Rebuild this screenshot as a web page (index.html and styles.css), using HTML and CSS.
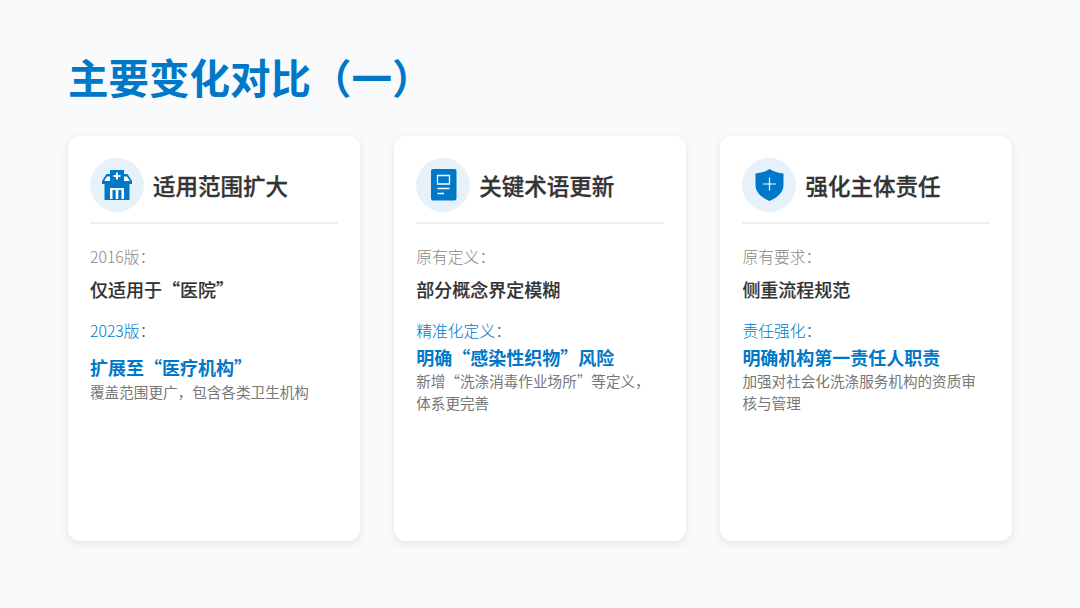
FILE: index.html
```html
<!DOCTYPE html>
<html lang="zh-CN">
<head>
<meta charset="utf-8">
<title>主要变化对比（一）</title>
<link rel="stylesheet" href="styles.css">
</head>
<body>
<main class="slide">
  <h1 class="title">主要变化对比（一）</h1>
  <div class="cards">
    <section class="card">
      <header class="card-head">
        <span class="badge">
          <svg class="icon" viewBox="0 0 32 32"><path fill="#0078c8" d="M9 1h14v4h3.500L31 12v3h-2.500v16h-25V15H1v-3l4.500-7H9z"/><path fill="#fff" d="M15 3.500h2V6h2.500v2H17v2.500h-2V8h-2.500V6H15z"/><path fill="#fff" d="M6 7.500h3V12H3.200zM23 7.500h3L28.800 12H23z"/><path fill="#fff" d="M9 19h14v11h-2.500v-9h-3.200v9h-2.600v-9h-3.200v9H9z"/></svg>
        </span>
        <h2 class="card-title">适用范围扩大</h2>
      </header>
      <p class="label">2016版：</p>
      <p class="strong">仅适用于“医院”</p>
      <p class="label accent">2023版：</p>
      <p class="strong accent tall">扩展至“医疗机构”</p>
      <p class="note">覆盖范围更广，包含各类卫生机构</p>
    </section>
    <section class="card">
      <header class="card-head">
        <span class="badge">
          <svg class="icon" viewBox="0 0 32 32"><rect x="4" y="0" width="25.500" height="31.500" rx="2" fill="#0078c8"/><path fill="none" stroke="#fff" stroke-width="1.300" d="M10.500 6.500h12v8.500h-12z"/><path fill="none" stroke="#fff" stroke-width="1.300" d="M10.500 19.500h12M10.500 24.500h6.500"/></svg>
        </span>
        <h2 class="card-title">关键术语更新</h2>
      </header>
      <p class="label">原有定义：</p>
      <p class="strong">部分概念界定模糊</p>
      <p class="label accent">精准化定义：</p>
      <p class="strong accent">明确“感染性织物”风险</p>
      <p class="note">新增“洗涤消毒作业场所”等定义，体系更完善</p>
    </section>
    <section class="card">
      <header class="card-head">
        <span class="badge">
          <svg class="icon" viewBox="0 0 32 32"><path fill="#0078c8" d="M16.500 0c4 2.800 9 4 14 4.500V16c0 7-5.500 12.500-14 16C8 28.500 2.500 23 2.500 16V4.500C7.500 4 12.500 2.800 16.500 0z"/><path fill="none" stroke="#fff" stroke-width="1.200" d="M16.500 8.500v13M10 15h13"/></svg>
        </span>
        <h2 class="card-title">强化主体责任</h2>
      </header>
      <p class="label">原有要求：</p>
      <p class="strong">侧重流程规范</p>
      <p class="label accent">责任强化：</p>
      <p class="strong accent">明确机构第一责任人职责</p>
      <p class="note">加强对社会化洗涤服务机构的资质审核与管理</p>
    </section>
  </div>
</main>
</body>
</html>
```
FILE: styles.css
```css
* { box-sizing: border-box; margin: 0; padding: 0; }
html, body { width: 1080px; height: 608px; overflow: hidden; }
body {
  background: #f8fafc;
  font-family: "Noto Sans CJK SC", "Noto Sans", sans-serif;
}
.slide { padding: 49px 68px 0; display: flex; flex-direction: column; }
.title {
  font-size: 40.500px;
  line-height: 56px;
  font-weight: 700;
  color: #0078c8;
}
.cards {
  margin-top: 31px;
  display: grid;
  grid-template-columns: repeat(3, 292px);
  gap: 34.200px;
}
.card {
  height: 405px;
  background: #fff;
  border-radius: 12px;
  box-shadow: 0 3px 10px rgba(0, 0, 0, 0.09);
  padding: 22px 22px 0;
}
.card-head {
  display: flex;
  align-items: center;
  gap: 9px;
  padding-bottom: 10px;
  border-bottom: 2px solid #eef0f2;
  margin-bottom: 21px;
}
.badge {
  width: 54px;
  height: 54px;
  border-radius: 50%;
  background: #e6f1fa;
  display: flex;
  align-items: center;
  justify-content: center;
  flex: none;
}
.icon { width: 32px; height: 32px; display: block; }
.card-title {
  font-size: 22.500px;
  line-height: 32px;
  font-weight: 500;
  color: #333;
  -webkit-text-stroke: 0.3px #333;
}
.label {
  font-size: 15.800px;
  line-height: 24px;
  font-weight: 300;
  color: #888;
}
.strong {
  font-size: 18px;
  line-height: 26px;
  font-weight: 500;
  color: #333;
  margin-top: 7px;
  -webkit-text-stroke: 0.15px #333;
}
.label.accent { color: #0078c8; margin-top: 17px; }
.strong.accent {
  font-weight: 700;
  color: #0078c8;
  margin-top: 1px;
  -webkit-text-stroke: 0;
}
.strong.accent.tall { margin-top: 11px; margin-bottom: 1px; }
.note {
  font-size: 14.600px;
  line-height: 22px;
  color: #777;
  margin-top: 0;
}
```
